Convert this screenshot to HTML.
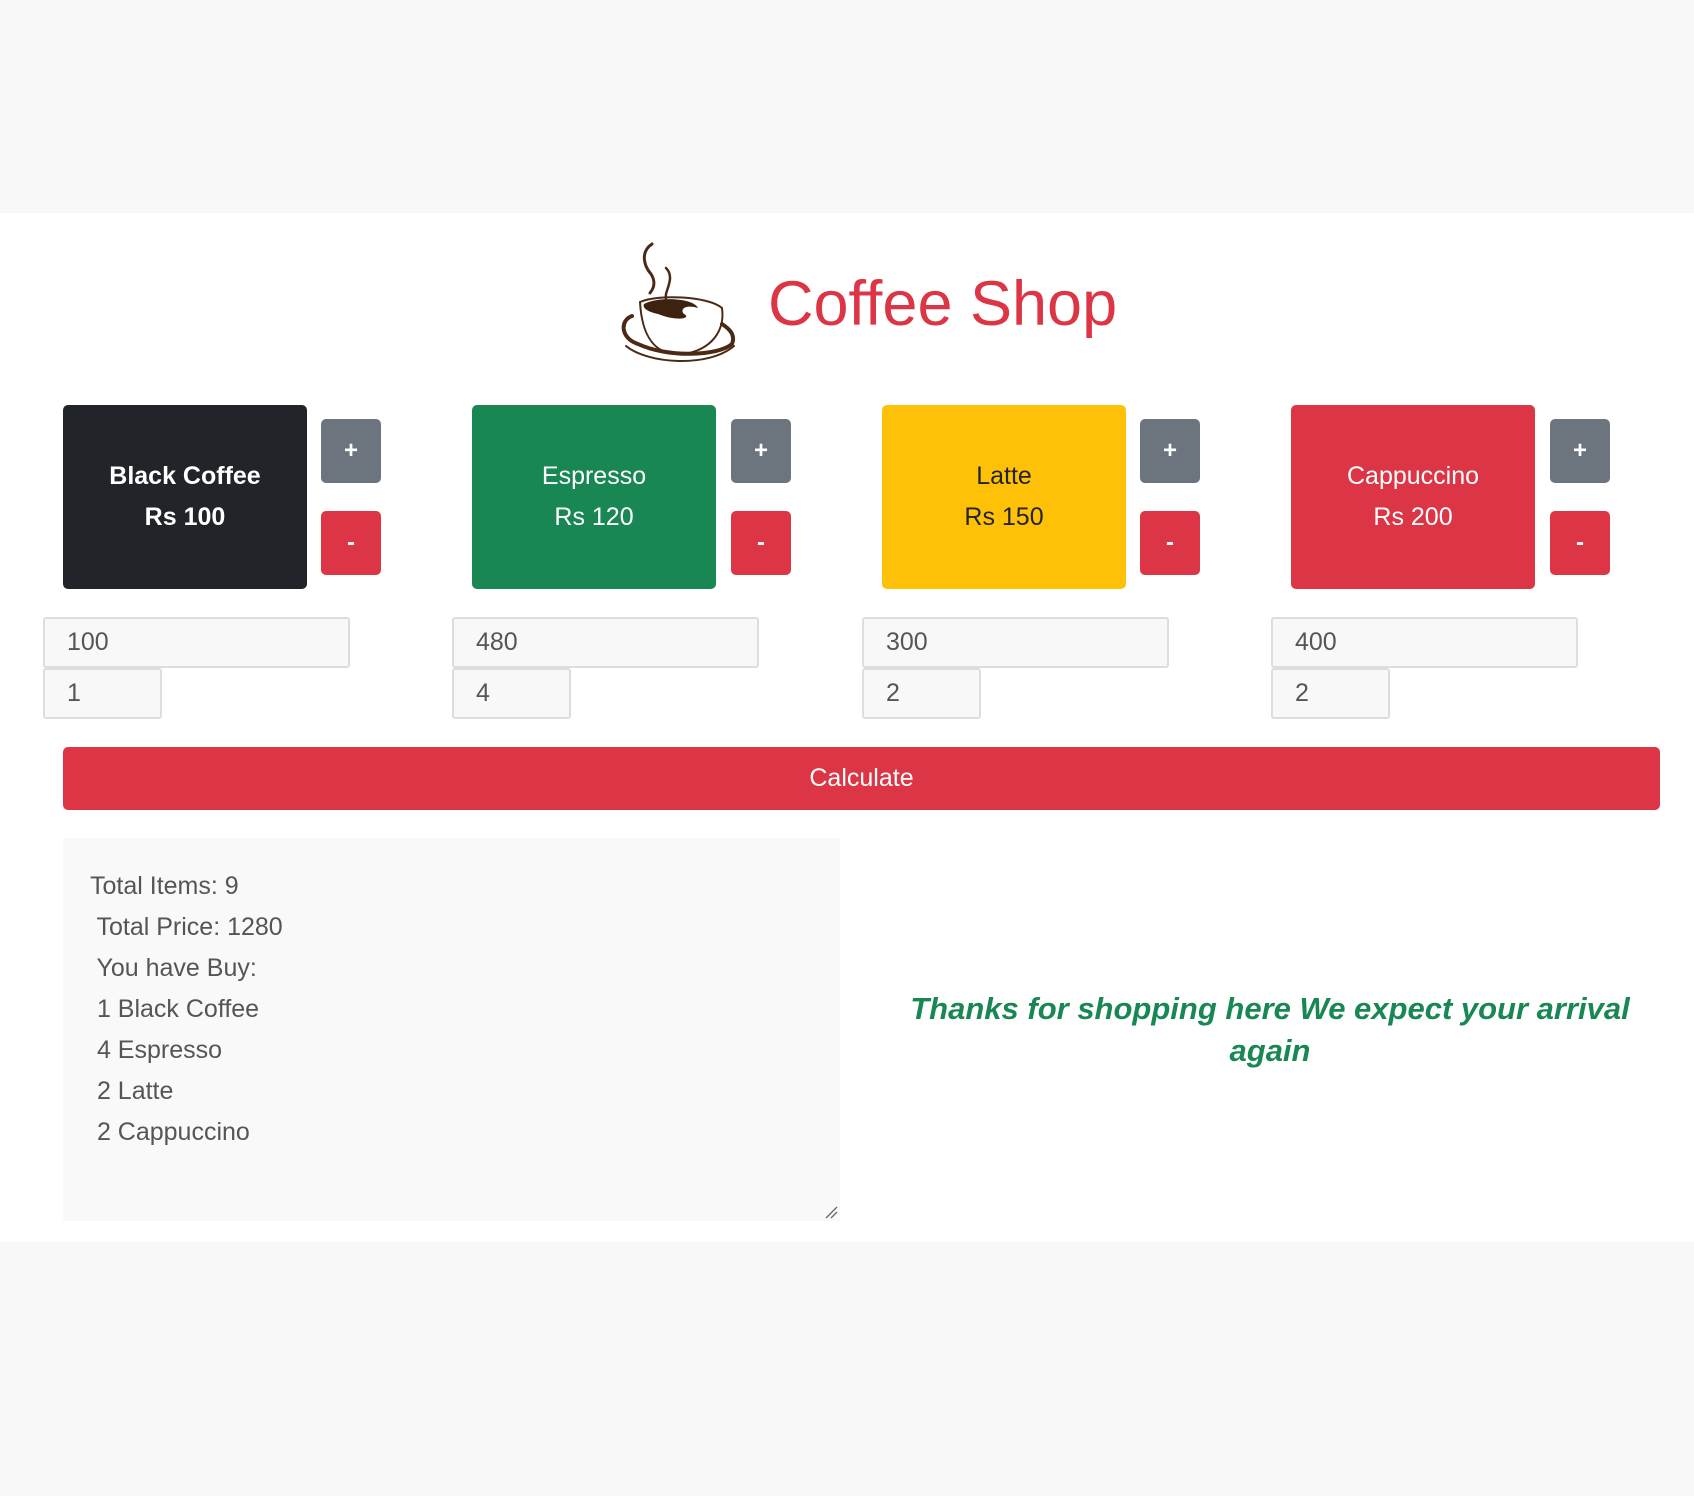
<!DOCTYPE html>
<html><head><meta charset="utf-8"><style>
body{margin:0;width:1694px;height:1496px;background:#f8f8f8;font-family:"Liberation Sans",sans-serif;position:relative;overflow:hidden}
.white{position:absolute;left:0;top:213px;width:1694px;height:1029px;background:#fff}
.a{position:absolute}
.card{position:absolute;top:405px;width:244px;height:184px;border-radius:5px;display:flex;flex-direction:column;justify-content:center;align-items:center;text-align:center;font-size:25px;line-height:41px;color:#fff}
.btn{position:absolute;width:60px;height:64px;border-radius:5px;color:#fff;font-size:24px;font-weight:bold;display:flex;align-items:center;justify-content:center}
.p{background:#6c757d;top:419px}.m{background:#dc3545;top:511px}
.in{position:absolute;background:#f8f8f8;border:2px solid #ddd;border-radius:3px;box-sizing:border-box;font-size:25px;color:#555;padding-left:22px;display:flex;align-items:center}
.ta{position:absolute;left:63px;top:838px;width:777px;height:383px;background:#f9f9f9;color:#555;font-size:25px;line-height:41px}
</style></head><body>
<div class="white"></div>
<svg class="a" style="left:618px;top:238px" width="124" height="132" viewBox="0 0 124 132">
<g fill="none" stroke="#4a2a15" stroke-linecap="round">
<path d="M34 6 C22 14 26 28 33 36 C38 44 36 50 32 55" stroke-width="3"/>
<path d="M48 30 C56 38 50 48 48 56 C47 62 49 66 50 68" stroke-width="2.5"/>
<path d="M22 64 C40 56 90 58 104 70 C108 98 86 116 60 116 C38 116 24 100 22 64 Z" stroke-width="2"/>
<path d="M14 78 C2 82 2 100 20 106 C50 120 100 118 114 106 C118 96 110 90 104 86" stroke-width="4"/>
<path d="M8 108 C30 126 90 130 116 108" stroke-width="2"/>
</g>
<path d="M26 66 C40 58 76 60 80 70 C66 66 62 72 66 76 C74 80 60 84 40 76 C30 74 24 70 26 66 Z" fill="#3e2210"/>
</svg>
<div class="a" style="left:768px;top:264px;font-size:63px;color:#dc3545;line-height:80px">Coffee Shop</div>

<div class="card" style="left:63px;background:#212529;font-weight:bold">Black Coffee<br>Rs 100</div>
<div class="btn p" style="left:321px">+</div><div class="btn m" style="left:321px">-</div>
<div class="card" style="left:472px;background:#198754">Espresso<br>Rs 120</div>
<div class="btn p" style="left:731px">+</div><div class="btn m" style="left:731px">-</div>
<div class="card" style="left:882px;background:#ffc107;color:#212529">Latte<br>Rs 150</div>
<div class="btn p" style="left:1140px">+</div><div class="btn m" style="left:1140px">-</div>
<div class="card" style="left:1291px;background:#dc3545">Cappuccino<br>Rs 200</div>
<div class="btn p" style="left:1550px">+</div><div class="btn m" style="left:1550px">-</div>

<div class="in" style="left:43px;top:617px;width:307px;height:51px">100</div>
<div class="in" style="left:43px;top:668px;width:119px;height:51px">1</div>
<div class="in" style="left:452px;top:617px;width:307px;height:51px">480</div>
<div class="in" style="left:452px;top:668px;width:119px;height:51px">4</div>
<div class="in" style="left:862px;top:617px;width:307px;height:51px">300</div>
<div class="in" style="left:862px;top:668px;width:119px;height:51px">2</div>
<div class="in" style="left:1271px;top:617px;width:307px;height:51px">400</div>
<div class="in" style="left:1271px;top:668px;width:119px;height:51px">2</div>

<div class="a" style="left:63px;top:747px;width:1597px;height:63px;background:#dc3545;border-radius:5px;color:#fff;font-size:25px;display:flex;align-items:center;justify-content:center">Calculate</div>

<div class="ta"><div style="position:absolute;left:27px;top:28px;white-space:pre">Total Items: 9
 Total Price: 1280
 You have Buy:
 1 Black Coffee
 4 Espresso
 2 Latte
 2 Cappuccino</div>
<svg style="position:absolute;right:2px;bottom:2px" width="14" height="14"><path d="M2 13 L13 2 M7 13 L13 7" stroke="#666" stroke-width="1.3"/></svg></div>

<div class="a" style="left:890px;top:988px;width:760px;text-align:center;font-size:31px;font-style:italic;font-weight:bold;color:#198754;line-height:42px">Thanks for shopping here We expect your arrival again</div>
</body></html>
